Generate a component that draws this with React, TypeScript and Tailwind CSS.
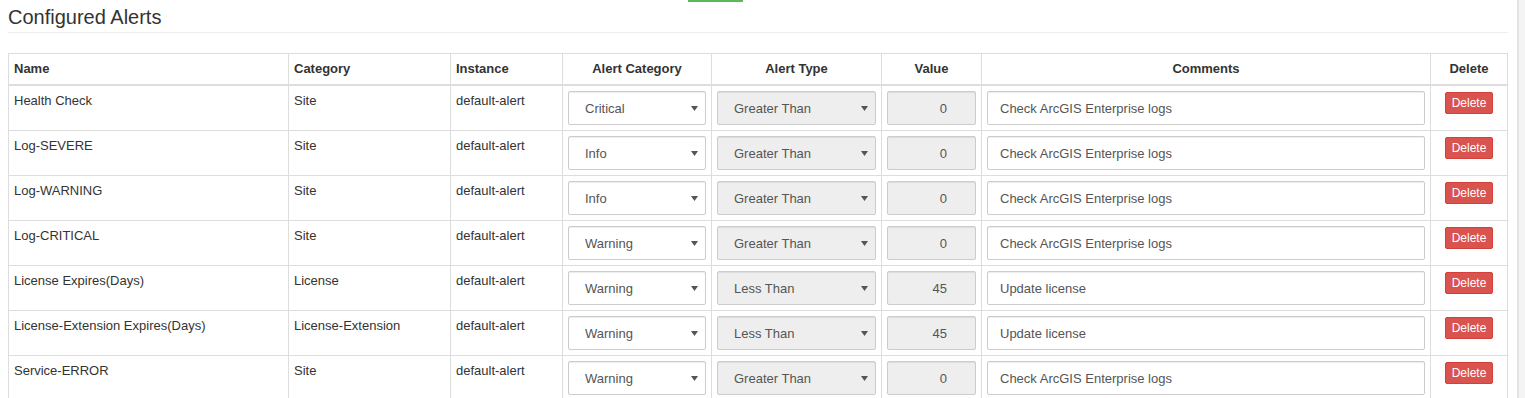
import { ChangeEvent, useState } from 'react'

type Alert = {
  id: string
  name: string
  category: string
  instance: string
  level: string
  type: string
  value: number
  comment: string
}

const initialAlerts: Alert[] = [
  { id: 'health', name: 'Health Check', category: 'Site', instance: 'default-alert', level: 'Critical', type: 'Greater Than', value: 0, comment: 'Check ArcGIS Enterprise logs' },
  { id: 'severe', name: 'Log-SEVERE', category: 'Site', instance: 'default-alert', level: 'Info', type: 'Greater Than', value: 0, comment: 'Check ArcGIS Enterprise logs' },
  { id: 'warning', name: 'Log-WARNING', category: 'Site', instance: 'default-alert', level: 'Info', type: 'Greater Than', value: 0, comment: 'Check ArcGIS Enterprise logs' },
  { id: 'critical', name: 'Log-CRITICAL', category: 'Site', instance: 'default-alert', level: 'Warning', type: 'Greater Than', value: 0, comment: 'Check ArcGIS Enterprise logs' },
  { id: 'license', name: 'License Expires(Days)', category: 'License', instance: 'default-alert', level: 'Warning', type: 'Less Than', value: 45, comment: 'Update license' },
  { id: 'license-ext', name: 'License-Extension Expires(Days)', category: 'License-Extension', instance: 'default-alert', level: 'Warning', type: 'Less Than', value: 45, comment: 'Update license' },
  { id: 'service-error', name: 'Service-ERROR', category: 'Site', instance: 'default-alert', level: 'Warning', type: 'Greater Than', value: 0, comment: 'Check ArcGIS Enterprise logs' }
]

const levels = ['Critical', 'Warning', 'Info']
const types = ['Greater Than', 'Less Than']

const Caret = () => (
  <svg width="7" height="5" viewBox="0 0 7 5" className="pointer-events-none absolute right-[8px] top-[15px]">
    <path d="M0 0 H7 L3.5 5 Z" fill="#555" />
  </svg>
)

const AlertsTable = () => {
  const [alerts, setAlerts] = useState(initialAlerts)

  const update = (id: string, key: keyof Alert) => (e: ChangeEvent<HTMLSelectElement | HTMLInputElement>) =>
    setAlerts(alerts.map(a => (a.id === id ? { ...a, [key]: e.target.value } : a)))

  const headers = [
    { label: 'Name', width: 'w-[280px]', align: 'text-left' },
    { label: 'Category', width: 'w-[162px]', align: 'text-left' },
    { label: 'Instance', width: 'w-[112px]', align: 'text-left' },
    { label: 'Alert Category', width: 'w-[149px]', align: 'text-center' },
    { label: 'Alert Type', width: 'w-[170px]', align: 'text-center' },
    { label: 'Value', width: 'w-[100px]', align: 'text-center' },
    { label: 'Comments', width: 'w-[449px]', align: 'text-center' },
    { label: 'Delete', width: 'w-[77px]', align: 'text-center' }
  ]

  return (
    <table className="w-[1500px] table-fixed border-collapse border border-[#ddd] text-[13px] leading-[19px] text-[#333]">
      <colgroup>
        {headers.map(h => (
          <col key={h.label} className={h.width} />
        ))}
      </colgroup>
      <thead>
        <tr>
          {headers.map(h => (
            <th key={h.label} className={`border border-b-2 border-[#ddd] p-[5px] leading-[20px] font-bold ${h.align}`}>
              {h.label}
            </th>
          ))}
        </tr>
      </thead>
      <tbody>
        {alerts.map(alert => (
          <tr key={alert.id}>
            <td className="border border-[#ddd] p-[5px] align-top">{alert.name}</td>
            <td className="border border-[#ddd] p-[5px] align-top">{alert.category}</td>
            <td className="border border-[#ddd] p-[5px] align-top">{alert.instance}</td>
            <td className="border border-[#ddd] p-[5px] align-top">
              <div className="relative">
                <select
                  value={alert.level}
                  onChange={update(alert.id, 'level')}
                  className="h-[34px] w-full appearance-none rounded-[2px] border border-[#ccc] bg-white pl-[16px] text-[13px] text-[#555] shadow-[inset_0_1px_1px_rgba(0,0,0,0.075)] outline-none"
                >
                  {levels.map(l => (
                    <option key={l}>{l}</option>
                  ))}
                </select>
                <Caret />
              </div>
            </td>
            <td className="border border-[#ddd] p-[5px] align-top">
              <div className="relative">
                <select
                  value={alert.type}
                  disabled
                  className="h-[34px] w-full appearance-none rounded-[2px] border border-[#ccc] bg-[#eee] pl-[16px] text-[13px] text-[#555] opacity-100 shadow-[inset_0_1px_1px_rgba(0,0,0,0.075)]"
                >
                  {types.map(t => (
                    <option key={t}>{t}</option>
                  ))}
                </select>
                <Caret />
              </div>
            </td>
            <td className="border border-[#ddd] p-[5px] align-top">
              <input
                value={alert.value}
                disabled
                readOnly
                className="h-[34px] w-full rounded-[2px] border border-[#ccc] bg-[#eee] pr-[28px] text-right text-[13px] text-[#555] shadow-[inset_0_1px_1px_rgba(0,0,0,0.075)]"
              />
            </td>
            <td className="border border-[#ddd] p-[5px] align-top">
              <input
                value={alert.comment}
                onChange={update(alert.id, 'comment')}
                className="h-[34px] w-full rounded-[2px] border border-[#ccc] bg-white px-[12px] text-[13px] text-[#555] shadow-[inset_0_1px_1px_rgba(0,0,0,0.075)] outline-none"
              />
            </td>
            <td className="border border-[#ddd] p-[5px] text-center align-top">
              <button
                onClick={() => setAlerts(alerts.filter(a => a.id !== alert.id))}
                className="mt-[1px] h-[22px] w-[48px] rounded-[2px] border border-[#d43f3a] bg-[#d9534f] text-[12px] leading-[18px] text-white"
              >
                Delete
              </button>
            </td>
          </tr>
        ))}
      </tbody>
    </table>
  )
}

export default function App() {
  return (
    <div className="flex h-[398px] w-[1525px] overflow-hidden bg-white font-['Liberation_Sans',Arial,sans-serif]">
      <div className="flex-1">
        {/* active tab marker */}
        <div className="h-[2px]">
          <div className="ml-[688px] h-[2px] w-[55px] bg-[#5cb85c]" />
        </div>

        <div className="pl-[8px] pr-[9px]">
          <h2 className="border-b border-[#eee] pt-[4px] pb-[4px] text-[20px] leading-[22px] font-normal text-[#333]">
            Configured Alerts
          </h2>
          <div className="mt-[20px]">
            <AlertsTable />
          </div>
        </div>
      </div>

      {/* scrollbar track */}
      <div className="w-[8px] border-l-2 border-[#e3e3e3] bg-[#f4f4f4]" />
    </div>
  )
}
